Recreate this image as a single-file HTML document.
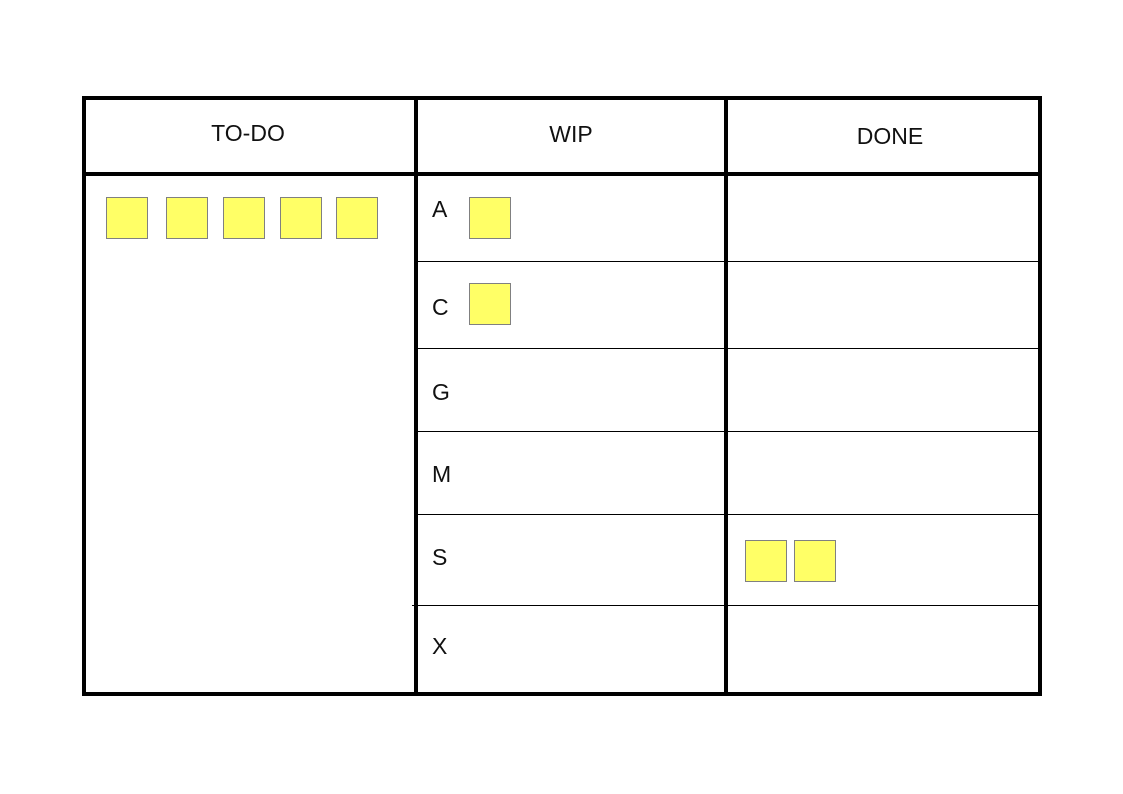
<!DOCTYPE html><html><head><style>
body{margin:0;width:1123px;height:794px;background:#fff;position:relative;overflow:hidden;font-family:"Liberation Sans",sans-serif;color:#111}
.b{position:absolute;background:#000}
.t{position:absolute;background:#000;height:1px}
.s{position:absolute;width:40px;height:40px;background:#ffff66;border:1px solid #808080}
.l{position:absolute;font-size:23px;line-height:26px}
</style></head><body>
<div class="b" style="left:82px;top:96px;width:960px;height:4px"></div>
<div class="b" style="left:82px;top:692px;width:960px;height:4px"></div>
<div class="b" style="left:82px;top:96px;width:4px;height:600px"></div>
<div class="b" style="left:1038px;top:96px;width:4px;height:600px"></div>
<div class="b" style="left:82px;top:172px;width:960px;height:4px"></div>
<div class="b" style="left:414px;top:96px;width:4px;height:600px"></div>
<div class="b" style="left:724px;top:96px;width:4px;height:600px"></div>
<div class="t" style="left:418px;top:261px;width:620px"></div>
<div class="t" style="left:418px;top:348px;width:620px"></div>
<div class="t" style="left:418px;top:431px;width:620px"></div>
<div class="t" style="left:418px;top:514px;width:620px"></div>
<div class="t" style="left:412px;top:605px;width:626px"></div>
<div class="l" style="left:86px;width:324px;text-align:center;top:120px">TO-DO</div>
<div class="l" style="left:418px;width:306px;text-align:center;top:121px">WIP</div>
<div class="l" style="left:728px;width:324px;text-align:center;top:123px">DONE</div>
<div class="l" style="left:432px;top:196px">A</div>
<div class="l" style="left:432px;top:294px">C</div>
<div class="l" style="left:432px;top:379px">G</div>
<div class="l" style="left:432px;top:461px">M</div>
<div class="l" style="left:432px;top:544px">S</div>
<div class="l" style="left:432px;top:633px">X</div>
<div class="s" style="left:106px;top:197px"></div>
<div class="s" style="left:166px;top:197px"></div>
<div class="s" style="left:223px;top:197px"></div>
<div class="s" style="left:280px;top:197px"></div>
<div class="s" style="left:336px;top:197px"></div>
<div class="s" style="left:469px;top:197px"></div>
<div class="s" style="left:469px;top:283px"></div>
<div class="s" style="left:745px;top:540px"></div>
<div class="s" style="left:794px;top:540px"></div>
</body></html>
